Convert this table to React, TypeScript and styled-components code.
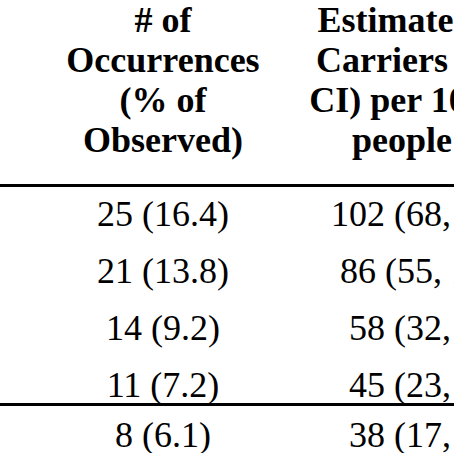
import React from "react";
import styled, { createGlobalStyle } from "styled-components";

const GlobalStyle = createGlobalStyle`
  html, body {
    margin: 0;
    padding: 0;
    background: #ffffff;
    overflow: hidden;
  }
  body {
    font-family: "Liberation Serif", "Times New Roman", serif;
    color: #000000;
  }
`;

const Table = styled.div`
  width: 551px;
  font-family: "Liberation Serif", "Times New Roman", serif;
  font-size: 36px;
  color: #000000;
`;

const HeaderRow = styled.div`
  display: grid;
  grid-template-columns: 286px 245px;
  padding: 0 0 24px 20px;
  border-bottom: 3px solid #000000;
  font-weight: 700;
  line-height: 40px;
  text-align: center;
`;

const HeadCell = styled.div`
  white-space: nowrap;
`;

const Line = styled.span`
  display: block;
`;

const Group = styled.div<{ $top: number; $rule?: boolean }>`
  display: flex;
  flex-direction: column;
  gap: 21px;
  padding: ${(p) => p.$top}px 0 0 20px;
  border-bottom: ${(p) => (p.$rule ? "3px solid #000000" : "none")};
`;

const Row = styled.div`
  display: grid;
  grid-template-columns: 286px 245px;
  line-height: 36px;
  text-align: center;
  white-space: nowrap;
`;

const Cell = styled.div``;

type Datum = { occ: string; est: string };

const groupA: Datum[] = [
  { occ: "25 (16.4)", est: "102 (68, 145)" },
  { occ: "21 (13.8)", est: "86 (55, 126)" },
  { occ: "14 (9.2)", est: "58 (32, 94)" },
  { occ: "11 (7.2)", est: "45 (23, 77)" },
];

const groupB: Datum[] = [{ occ: "8 (6.1)", est: "38 (17, 69)" }];

export default function App() {
  return (
    <>
      <GlobalStyle />
      <Table>
        <HeaderRow>
          <HeadCell>
            <Line># of</Line>
            <Line>Occurrences</Line>
            <Line>(% of</Line>
            <Line>Observed)</Line>
          </HeadCell>
          <HeadCell>
            <Line>Estimated # of</Line>
            <Line>Carriers (95%</Line>
            <Line>CI) per 100,000</Line>
            <Line>people (n)</Line>
          </HeadCell>
        </HeaderRow>
        <Group $top={9} $rule>
          {groupA.map((d) => (
            <Row key={d.occ}>
              <Cell>{d.occ}</Cell>
              <Cell>{d.est}</Cell>
            </Row>
          ))}
        </Group>
        <Group $top={11}>
          {groupB.map((d) => (
            <Row key={d.occ}>
              <Cell>{d.occ}</Cell>
              <Cell>{d.est}</Cell>
            </Row>
          ))}
        </Group>
      </Table>
    </>
  );
}
